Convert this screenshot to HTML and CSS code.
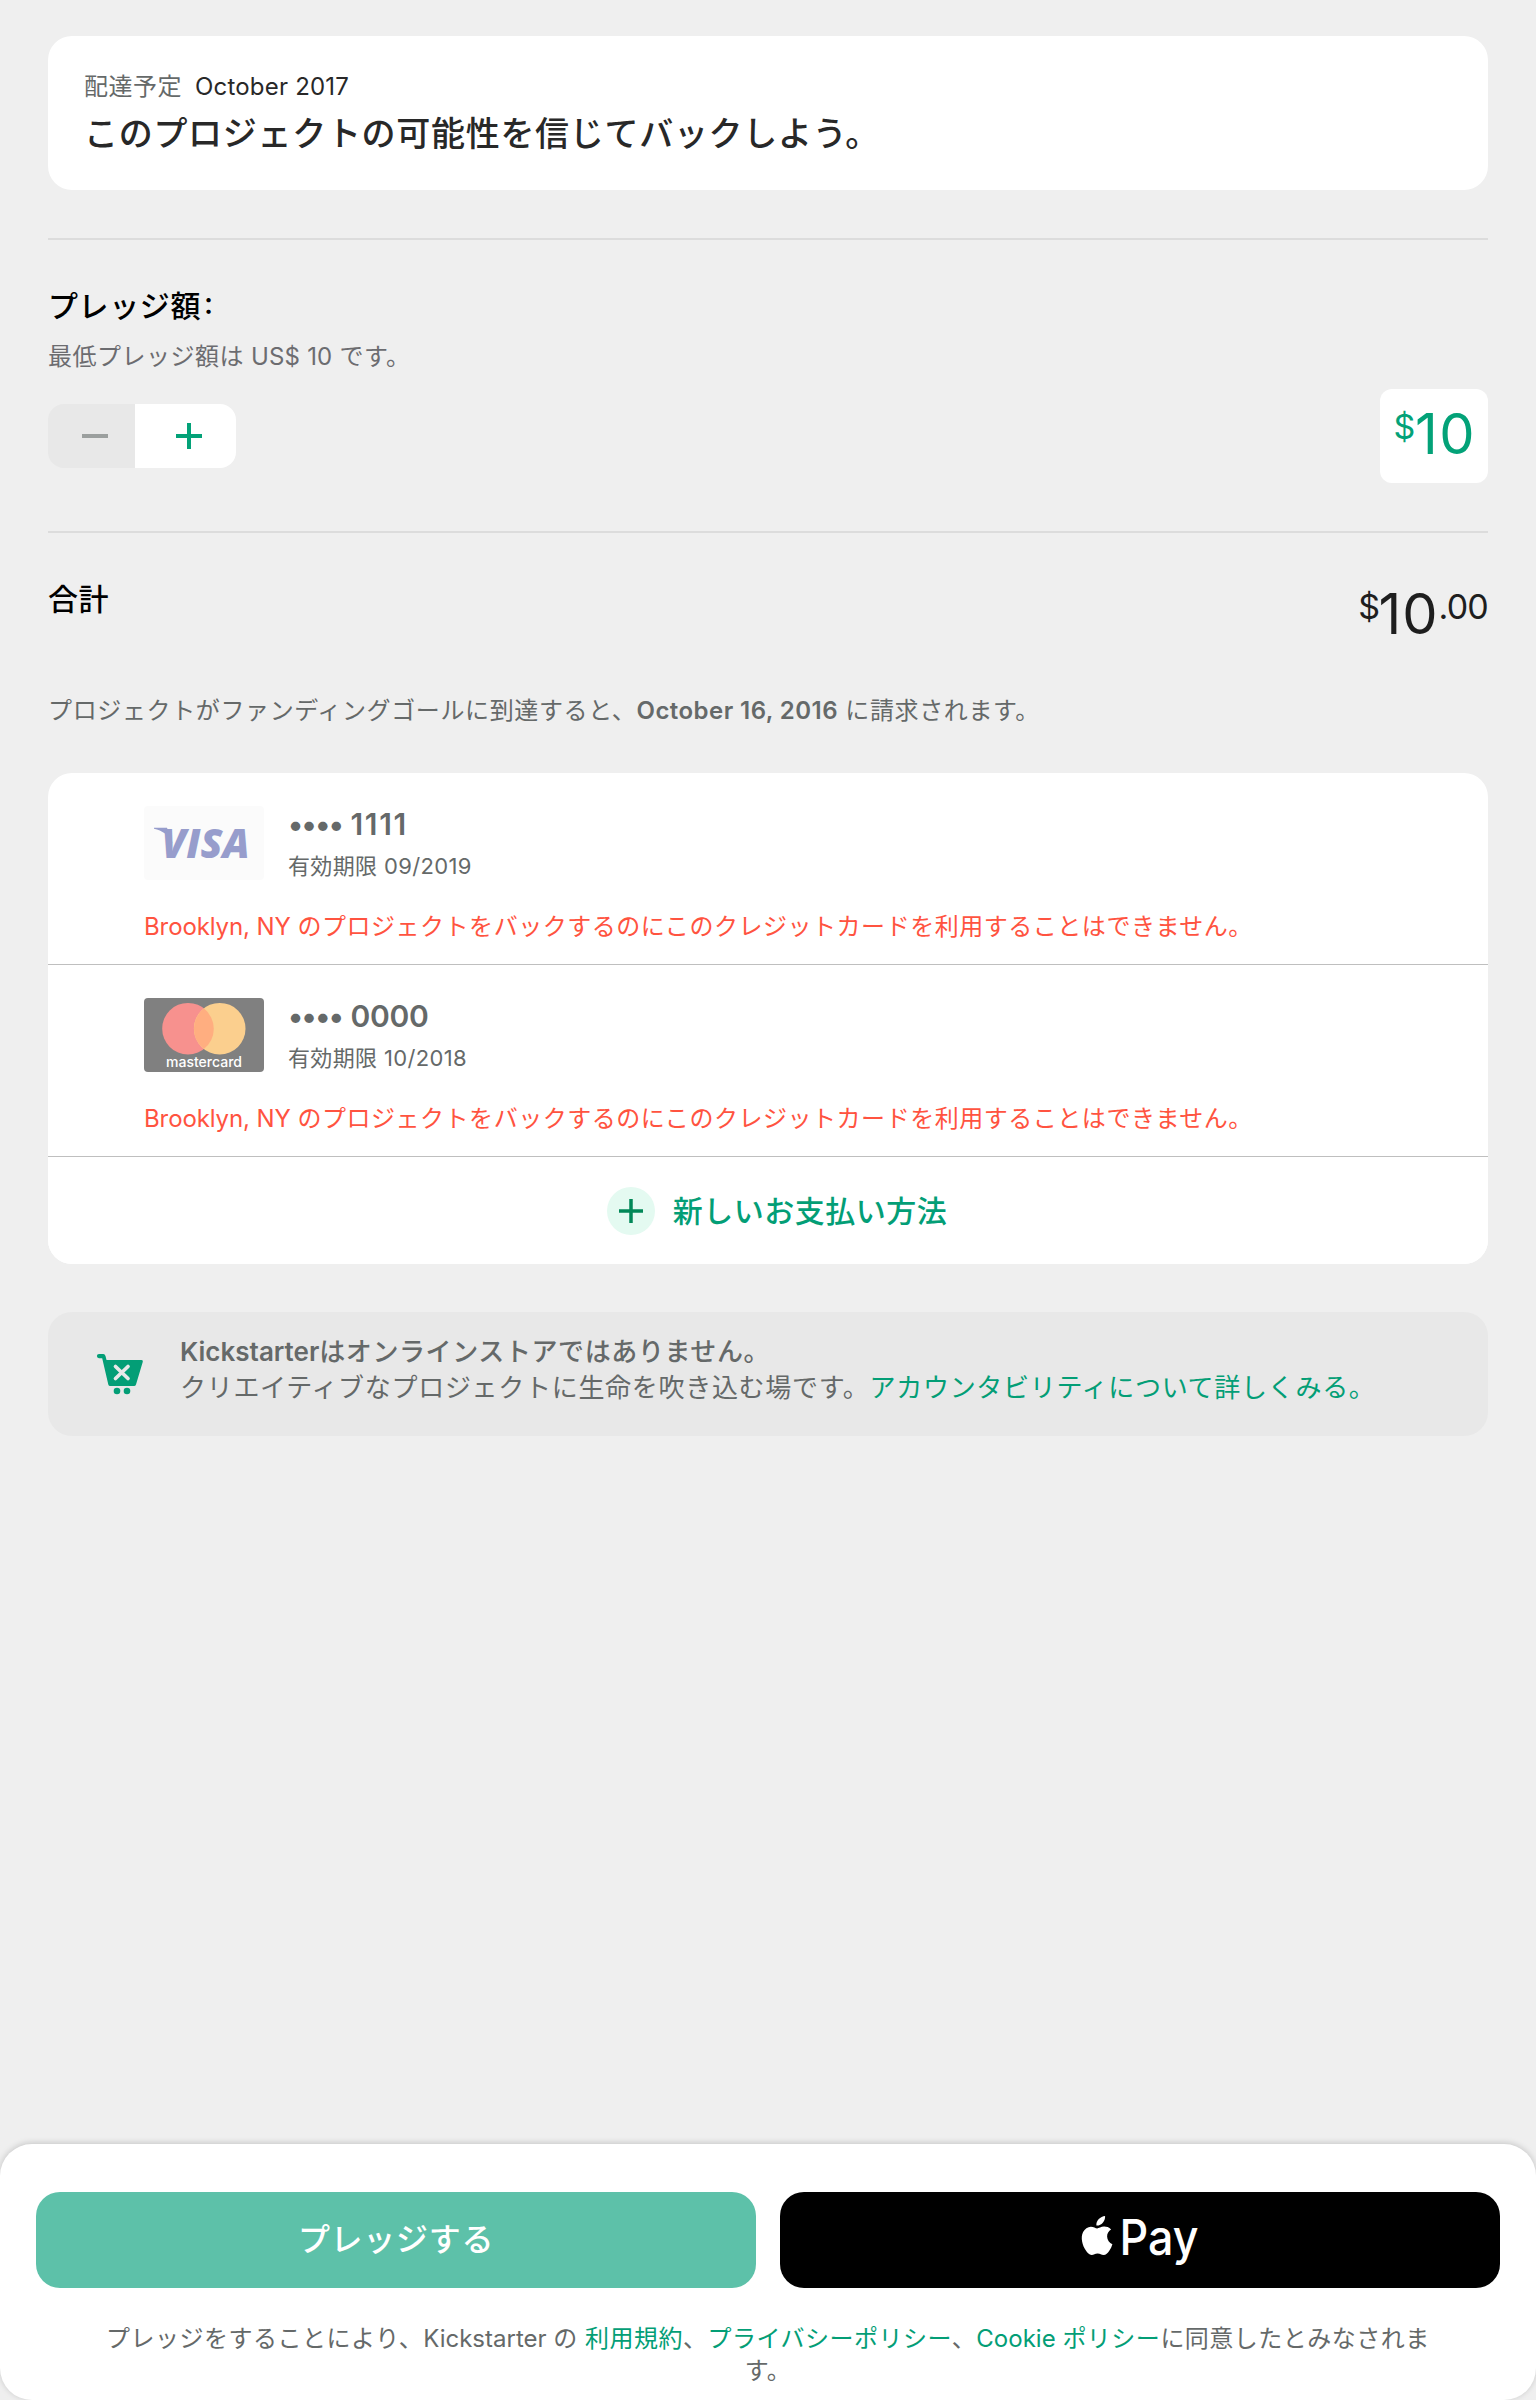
FILE: index.html
```html
<!DOCTYPE html>
<html lang="ja">
<head>
<meta charset="utf-8">
<title>プレッジ</title>
<link rel="stylesheet" href="styles.css">
</head>
<body>
<main class="content">
  <section class="reward">
    <p class="delivery"><span class="delivery-label">配達予定</span><span class="delivery-date">October 2017</span></p>
    <h1 class="reward-title">このプロジェクトの可能性を信じてバックしよう。</h1>
  </section>
  <hr class="rule">
  <section class="pledge">
    <h2 class="heading">プレッジ額<span class="colon">:</span></h2>
    <p class="minimum">最低プレッジ額は<span class="latin"> US$ 10 </span>です。</p>
    <div class="pledge-row">
      <div class="stepper">
        <button class="step minus" aria-label="減らす"><svg width="26" height="26"><path d="M0 13H26" stroke="#9b9f9e" stroke-width="4"/></svg></button>
        <button class="step plus" aria-label="増やす"><svg width="26" height="26"><path d="M0 13H26M13 0V26" stroke="#03a278" stroke-width="4"/></svg></button>
      </div>
      <div class="amount-box"><span class="sup">$</span>10</div>
    </div>
  </section>
  <hr class="rule">
  <section class="total">
    <h2 class="heading">合計</h2>
    <div class="total-amount"><span class="sup">$</span>10<span class="sup cents">.00</span></div>
  </section>
  <p class="charge">プロジェクトがファンディングゴールに到達すると、<b>October 16, 2016</b> に請求されます。</p>
  <section class="cards">
    <article class="card">
      <div class="card-main">
        <svg class="logo" width="120" height="74" viewBox="0 0 120 74">
          <rect width="120" height="74" rx="4" fill="#fbfbfb"/>
          <path d="M10 21.800H23L29 38C25 29 18 24.500 10 22.800Z" fill="#979dcc"/>
          <text x="17.500" y="51.500" class="visa" textLength="88" lengthAdjust="spacingAndGlyphs">VISA</text>
        </svg>
        <div>
          <p class="number ones"><span class="dots">••••</span>1111</p>
          <p class="expiry">有効期限 09/2019</p>
        </div>
      </div>
      <p class="error"><span class="latin">Brooklyn, NY </span>のプロジェクトをバックするのにこのクレジットカードを利用することはできません。</p>
    </article>
    <article class="card">
      <div class="card-main">
        <svg class="logo" width="120" height="74" viewBox="0 0 120 74">
          <rect width="120" height="74" rx="4" fill="#808080"/>
          <circle cx="44" cy="30.700" r="25.800" fill="#f7918e"/>
          <circle cx="75.700" cy="30.700" r="25.800" fill="#fbcf8e"/>
          <path d="M59.850 10.350A25.800 25.800 0 0 1 59.850 51.050A25.800 25.800 0 0 1 59.850 10.350Z" fill="#ffae80"/>
          <text x="22" y="69" class="mastercard" textLength="76" lengthAdjust="spacingAndGlyphs">mastercard</text>
        </svg>
        <div>
          <p class="number"><span class="dots">••••</span>0000</p>
          <p class="expiry">有効期限 10/2018</p>
        </div>
      </div>
      <p class="error"><span class="latin">Brooklyn, NY </span>のプロジェクトをバックするのにこのクレジットカードを利用することはできません。</p>
    </article>
    <button class="add">
      <svg width="48" height="48"><circle cx="24" cy="24" r="24" fill="#e4faf1"/><path d="M12 24H36M24 12V36" stroke="#028858" stroke-width="3.500"/></svg>
      <span>新しいお支払い方法</span>
    </button>
  </section>
  <section class="notice">
    <svg class="cart" width="46" height="41" viewBox="0 0 46 41">
      <path d="M2 0H6.200Q8 0 8.500 2L9.500 6H44.500Q46.300 6 45.800 7.700L39 30.500Q38.500 32 37 32H13.200Q11.700 32 11.300 30.500L5.200 4.200H2A2.100 2.100 0 0 1 2 0Z" fill="#039e76"/>
      <circle cx="20" cy="37" r="3.300" fill="#039e76"/><circle cx="30" cy="37" r="3.300" fill="#039e76"/>
      <path d="M18.500 12.500L31 24.500M31 12.500L18.500 24.500" stroke="#e8e8e8" stroke-width="3.700" stroke-linecap="round"/>
    </svg>
    <div>
      <p class="notice-title"><span class="latin">Kickstarter</span>はオンラインストアではありません。</p>
      <p>クリエイティブなプロジェクトに生命を吹き込む場です。<a>アカウンタビリティについて詳しくみる。</a></p>
    </div>
  </section>
</main>
<footer class="footer">
  <div class="actions">
    <button class="btn pledge-btn">プレッジする</button>
    <button class="btn apple-btn" aria-label="Apple Pay">
      <svg width="160" height="80" viewBox="-20 -14 160 80" fill="#fff">
        <path d="M25.100 2C25.400 7.400 21 12 16.400 11.600C15.800 6.800 20.400 2.300 25.100 2Z"/>
        <path d="M31.100 15.500C28.600 17.100 27.100 19.400 27.100 22.600C27.200 26.400 29.400 29 32.400 30.200C31.700 32.600 30.700 34.700 29.300 36.700C27.600 39.200 26 41 23.600 41C21.100 41 20.400 39.600 17.600 39.600C14.800 39.600 13.900 41 11.700 41.100C9.300 41.200 7.500 38.900 5.900 36.600C2.500 31.700 .2 23.600 3.100 18C4.700 14.900 7.700 12.800 10.900 12.700C13.400 12.700 15.700 14.400 17.200 14.400C18.700 14.400 21.400 12.400 24.400 12.600C26.100 12.700 29.200 13.100 31.100 15.500Z"/>
        <text x="39.500" y="40.500" class="pay" textLength="79" lengthAdjust="spacingAndGlyphs">Pay</text>
      </svg>
    </button>
  </div>
  <p class="legal">プレッジをすることにより、<span class="latin">Kickstarter </span>の <a>利用規約</a>、<a>プライバシーポリシー</a>、<a><span class="latin">Cookie </span>ポリシー</a>に同意したとみなされま<br>す。</p>
</footer>
</body>
</html>
```
FILE: styles.css
```css
* { box-sizing: border-box; margin: 0; padding: 0; }

body {
  width: 1536px;
  height: 2400px;
  display: flex;
  flex-direction: column;
  background: #efefef;
  color: #656969;
  font-family: Inter, "Noto Sans CJK JP", sans-serif;
  font-size: 24px;
  line-height: 30px;
  letter-spacing: 0.5px;
}

button { border: 0; font: inherit; letter-spacing: inherit; color: inherit; }
svg { display: block; overflow: visible; }
a { color: #039e76; }
.latin { letter-spacing: 0; }

.content { flex: 1; padding: 36px 48px 0; }

.reward { height: 154px; padding: 35px 36px 0; background: #fff; border-radius: 24px; }
.delivery { display: flex; gap: 13px; line-height: 32px; }
.delivery-date { color: #282828; letter-spacing: 0.2px; }
.reward-title {
  margin-top: 6px;
  color: #282828;
  font-size: 34px;
  font-weight: 500;
  line-height: 50px;
  letter-spacing: 0.7px;
}

.rule { height: 2px; margin: 48px 0; border: 0; background: #dcdcdc; }

.heading { color: #000; font-size: 30px; font-weight: 500; line-height: 36px; letter-spacing: 0.6px; }
.colon { margin-left: 3px; font-feature-settings: "case"; }
.minimum { margin-top: 18px; color: #6c6c70; }
.minimum .latin { letter-spacing: 0.2px; }

.pledge-row { display: flex; justify-content: space-between; align-items: center; margin-top: 17px; }
.stepper { display: flex; width: 188px; height: 64px; border-radius: 16px; overflow: hidden; }
.step { display: flex; align-items: center; }
.minus { width: 87px; padding-left: 34px; background: #e8e8e8; }
.plus { width: 101px; padding-left: 41px; background: #fff; }

.amount-box {
  width: 108px;
  height: 94px;
  padding-right: 12px;
  border-radius: 12px;
  background: #fff;
  color: #03a278;
  font-size: 56px;
  line-height: 91px;
  letter-spacing: 1.5px;
  text-align: right;
}
.sup { font-size: 34px; line-height: 0; vertical-align: 15px; letter-spacing: -1.5px; }
.amount-box .sup { letter-spacing: -0.5px; }

.total { display: flex; justify-content: space-between; height: 67px; }
.total-amount { color: #1e1e1e; font-size: 56px; line-height: 67px; letter-spacing: 1px; }
.total-amount .cents { letter-spacing: -0.8px; }

.charge { margin-top: 48px; letter-spacing: 0.63px; }
.charge b { font-weight: 600; letter-spacing: 0.45px; }

.cards { margin-top: 47px; background: #fff; border-radius: 24px; overflow: hidden; }
.card { height: 192px; padding: 33px 0 0 96px; border-bottom: 1px solid #bfbfbf; }
.card-main { display: flex; gap: 24px; }
.number { font-size: 30px; font-weight: 600; line-height: 36px; letter-spacing: -0.3px; }
.ones { letter-spacing: 1.7px; }
.dots { margin-right: 8px; letter-spacing: -1.5px; }
.expiry { margin-top: 10px; font-size: 22px; line-height: 28px; letter-spacing: 0.35px; }
.error { margin-top: 32px; color: #ff5340; letter-spacing: 0.53px; }
.error .latin { letter-spacing: -0.1px; }
.visa { fill: #979dcc; font: italic 800 41px "Open Sans", sans-serif; letter-spacing: 0; }
.mastercard { fill: #fff; font: 500 14px Inter, sans-serif; letter-spacing: 0; }

.add {
  display: flex;
  width: 100%;
  height: 107px;
  padding-left: 18px;
  justify-content: center;
  align-items: center;
  gap: 18px;
  background: #fff;
  color: #039e76;
  font-size: 30px;
  font-weight: 500;
  letter-spacing: 0.5px;
}

.notice {
  display: flex;
  height: 124px;
  margin-top: 48px;
  padding: 22px 49px 0;
  border-radius: 24px;
  background: #e8e8e8;
  font-size: 26px;
  line-height: 36px;
  letter-spacing: 0.7px;
}
.cart { margin: 20px 37px 0 0; }
.notice-title { font-weight: 500; letter-spacing: 0.6px; }
.notice-title .latin { font-weight: 600; letter-spacing: 0; }

.footer {
  height: 256px;
  padding: 48px 36px 0;
  border-radius: 32px;
  background: #fff;
  box-shadow: 0 -1px 6px rgba(0, 0, 0, 0.18);
}
.actions { display: flex; gap: 24px; }
.btn { display: flex; flex: 1; height: 96px; justify-content: center; align-items: center; border-radius: 24px; }
.pledge-btn { background: #5dc1a9; color: #fff; font-size: 32px; font-weight: 500; letter-spacing: 0.7px; }
.apple-btn { background: #000; }
.pay { font: 500 49px Inter, sans-serif; letter-spacing: 0; }
.legal { margin-top: 35px; line-height: 32px; text-align: center; white-space: nowrap; }
```
